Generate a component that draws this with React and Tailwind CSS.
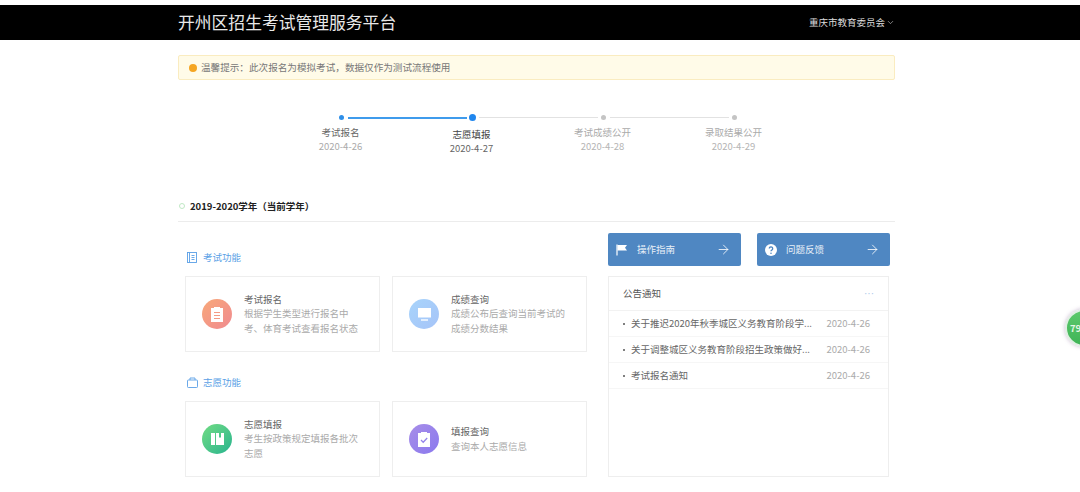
import { ChevronDown, ArrowRight } from 'lucide-react';

const steps = [
  { name: '考试报名', date: '2020-4-26', dot: 'w-[5px] h-[5px] bg-[#2f8fe8]', text: 'text-[#666]', sub: 'text-[#aaa]', line: 'h-[1.5px] bg-[#3f9bec]' },
  { name: '志愿填报', date: '2020-4-27', dot: 'w-[7px] h-[7px] bg-[#1f86ee]', text: 'text-[#444]', sub: 'text-[#666]', line: 'h-[1px] bg-[#e2e2e2]', shift: true },
  { name: '考试成绩公开', date: '2020-4-28', dot: 'w-[5px] h-[5px] bg-[#c4c4c4]', text: 'text-[#aaa]', sub: 'text-[#b4b4b4]', line: 'h-[1px] bg-[#e2e2e2]' },
  { name: '录取结果公开', date: '2020-4-29', dot: 'w-[5px] h-[5px] bg-[#c4c4c4]', text: 'text-[#aaa]', sub: 'text-[#b4b4b4]' },
];

const notices = [
  { title: '关于推迟2020年秋季城区义务教育阶段学...', date: '2020-4-26' },
  { title: '关于调整城区义务教育阶段招生政策做好...', date: '2020-4-26' },
  { title: '考试报名通知', date: '2020-4-26' },
];

const ClipIcon = () => (
  <svg width="14" height="16" viewBox="0 0 14 16">
    <path d="M1 2h3V1h6v1h3v14H1z" fill="white" />
    <path d="M4 6.5h6M4 9.5h6M4 12.5h6" stroke="#f49a84" strokeWidth="1.2" />
  </svg>
);

const ScreenIcon = () => (
  <svg width="15" height="14" viewBox="0 0 15 14">
    <rect x="1" y="1" width="13" height="9.5" fill="white" />
    <path d="M4 13h7" stroke="white" strokeWidth="1.4" />
  </svg>
);

const BookIcon = () => (
  <svg width="15" height="14" viewBox="0 0 15 14">
    <path d="M1 1h4v12H1zM6 1h3v5l1-1 1 1V1h3v12H6z" fill="white" />
  </svg>
);

const CheckClipIcon = () => (
  <svg width="14" height="16" viewBox="0 0 14 16">
    <path d="M1 2h3V1h6v1h3v14H1z" fill="white" />
    <path d="M4 9l2.2 2.2L10.2 7" fill="none" stroke="#9484ea" strokeWidth="1.3" />
  </svg>
);

const FlagIcon = () => (
  <svg width="12" height="12" viewBox="0 0 12 12">
    <path d="M1 0.5v11" stroke="white" strokeWidth="1.2" />
    <path d="M1.5 1H11L9 3.8 11 6.5H1.5z" fill="white" />
  </svg>
);

const HelpIcon = () => (
  <svg width="12" height="12" viewBox="0 0 12 12">
    <circle cx="6" cy="6" r="6" fill="white" />
    <path d="M4.3 4.6a1.7 1.7 0 1 1 2.6 1.4c-.6.4-.9.7-.9 1.3" fill="none" stroke="#4f87c2" strokeWidth="1.3" />
    <circle cx="6" cy="9.2" r=".8" fill="#4f87c2" />
  </svg>
);

const GuideIcon = () => (
  <svg width="10" height="11" viewBox="0 0 10 11" fill="none" stroke="#5a9fe6" strokeWidth="0.9" className="mt-[3px]">
    <rect x="0.5" y="0.5" width="9" height="10" />
    <path d="M2.5 0.5v10M4.5 3.5h3M4.5 5.5h3M4.5 7.5h3" />
  </svg>
);

const BagIcon = () => (
  <svg width="11" height="11" viewBox="0 0 11 11" fill="none" stroke="#5a9fe6" strokeWidth="0.9" className="mt-[3px]">
    <rect x="0.5" y="3" width="10" height="7.5" rx="0.8" />
    <path d="M3 3V1h5v2" />
  </svg>
);

function Card({ title, desc, circle, icon }) {
  return (
    <div className="w-[195px] h-[76px] border border-[#eeeeee] flex items-center pl-[16px] pr-[20px] pb-[1px] gap-[12px]">
      <div className={`w-[30px] h-[30px] rounded-full shrink-0 flex items-center justify-center ${circle}`}>
        {icon}
      </div>
      <div className="min-w-0 text-[9.5px] leading-[14.5px]">
        <p className="text-[#666]">{title}</p>
        <p className="text-[#aaa]">{desc}</p>
      </div>
    </div>
  );
}

function ActionButton({ icon, label }) {
  return (
    <div className="w-[133px] h-[33px] rounded-[2px] bg-[#4f87c2] flex items-center pl-[8px] pr-[10px] text-white">
      <span className="w-[12px] flex justify-center">{icon}</span>
      <span className="ml-[9px] text-[9.5px] text-[#e8f0f8]">{label}</span>
      <ArrowRight size={15} strokeWidth={1.3} className="ml-auto" />
    </div>
  );
}

export default function App() {
  return (
    <div className="relative w-[1080px] h-[492px] overflow-hidden bg-white pt-[5px] font-['Noto_Sans_CJK_SC','Noto_Sans',sans-serif]">
      {/* Header */}
      <div className="h-[35px] bg-black">
        <div className="w-[717px] h-full ml-[178px] flex items-center justify-between">
          <h1 className="text-[16.8px] leading-none font-normal text-[#e8e8e8]">开州区招生考试管理服务平台</h1>
          <div className="flex items-center gap-[1px] text-[9.5px] text-[#ddd]">
            重庆市教育委员会
            <ChevronDown size={9} strokeWidth={1.5} />
          </div>
        </div>
      </div>

      <div className="w-[717px] ml-[178px]">
        {/* Notice */}
        <div className="mt-[15px] h-[25px] rounded-[2px] border border-[#faecc0] bg-[#fffbe8] flex items-center pl-[10px] gap-[4px] text-[9.6px] text-[#777]">
          <span className="w-[8px] h-[8px] rounded-full bg-[#f5a623]" />
          温馨提示：此次报名为模拟考试，数据仅作为测试流程使用
        </div>

        {/* Steps */}
        <div className="mt-[34px] h-[50px] pl-[98px] flex">
          {steps.map((s) => (
            <div key={s.name} className="relative w-[131px] flex flex-col items-center">
              <div className="h-[7px] flex items-center">
                <span className={`rounded-full ${s.dot}`} />
              </div>
              {s.line && <span className={`absolute left-[72px] top-[3px] w-[119px] ${s.line}`} />}
              <p className={`pr-[2px] text-[9.5px] leading-[14px] ${s.shift ? 'mt-[6px]' : 'mt-[4px]'} ${s.text}`}>{s.name}</p>
              <p className={`pr-[2px] text-[9.5px] leading-[14px] ${s.sub}`}>{s.date}</p>
            </div>
          ))}
        </div>

        {/* Section title */}
        <div className="mt-[34px] h-[24px] border-b border-[#ececec] flex items-start">
          <span className="w-[6px] h-[6px] mt-[5px] ml-[1px] rounded-full border border-[#bfe8c4]" />
          <span className="ml-[5px] text-[9.5px] leading-[16px] font-bold text-[#222]">2019-2020学年（当前学年）</span>
        </div>

        <div className="flex pl-[7px] pt-[11px]">
          {/* Left column */}
          <div className="w-[423px]">
            <div className="h-[43px] pt-[16px] pl-[2px] flex items-start gap-[6px] text-[9.5px] leading-[16px] text-[#5a9fe6]">
              <GuideIcon />
              考试功能
            </div>
            <div className="flex gap-[12px]">
              <Card
                title="考试报名"
                desc="根据学生类型进行报名中考、体育考试查看报名状态"
                circle="bg-gradient-to-br from-[#f8a878] to-[#f08a90]"
                icon={<ClipIcon />}
              />
              <Card
                title="成绩查询"
                desc="成绩公布后查询当前考试的成绩分数结果"
                circle="bg-gradient-to-br from-[#a8d4fb] to-[#a6c4f8]"
                icon={<ScreenIcon />}
              />
            </div>
            <div className="h-[49px] pt-[22px] pl-[2px] flex items-start gap-[5px] text-[9.5px] leading-[16px] text-[#5a9fe6]">
              <BagIcon />
              志愿功能
            </div>
            <div className="flex gap-[12px]">
              <Card
                title="志愿填报"
                desc="考生按政策规定填报各批次志愿"
                circle="bg-gradient-to-br from-[#6fdc82] to-[#22b48e]"
                icon={<BookIcon />}
              />
              <Card
                title="填报查询"
                desc="查询本人志愿信息"
                circle="bg-gradient-to-br from-[#a88ee8] to-[#8a78ee]"
                icon={<CheckClipIcon />}
              />
            </div>
          </div>

          {/* Right column */}
          <div className="w-[282px]">
            <div className="flex justify-between">
              <ActionButton icon={<FlagIcon />} label="操作指南" />
              <ActionButton icon={<HelpIcon />} label="问题反馈" />
            </div>
            <div className="mt-[10px] w-[281px] h-[201px] border border-[#eeeeee]">
              <div className="h-[34px] pl-[14px] pr-[14px] border-b border-[#f2f2f2] flex items-center justify-between">
                <span className="text-[9.5px] text-[#555]">公告通知</span>
                <span className="font-['Liberation_Sans',sans-serif] text-[10px] leading-none text-[#a9c8ea]">···</span>
              </div>
              {notices.map((n) => (
                <div key={n.title} className="h-[26px] pl-[14px] pr-[18px] border-b border-[#f6f6f6] flex items-center text-[9.5px]">
                  <span className="w-[2px] h-[2px] rounded-full bg-[#555] shrink-0" />
                  <span className="ml-[6px] whitespace-nowrap text-[#666]">{n.title}</span>
                  <span className="ml-auto text-[#aaa]">{n.date}</span>
                </div>
              ))}
            </div>
          </div>
        </div>
      </div>

      {/* Floating badge */}
      <div className="absolute left-[1065px] top-[309px] w-[38px] h-[38px] rounded-full bg-gradient-to-b from-[#5cc96c] to-[#3fb457] border-2 border-[#dfeee2] shadow-[0_0_4px_rgba(120,80,140,0.4)] flex items-center pl-[3px] text-[9.5px] font-bold text-[#e6f6e6]">
        79%
      </div>
    </div>
  );
}
